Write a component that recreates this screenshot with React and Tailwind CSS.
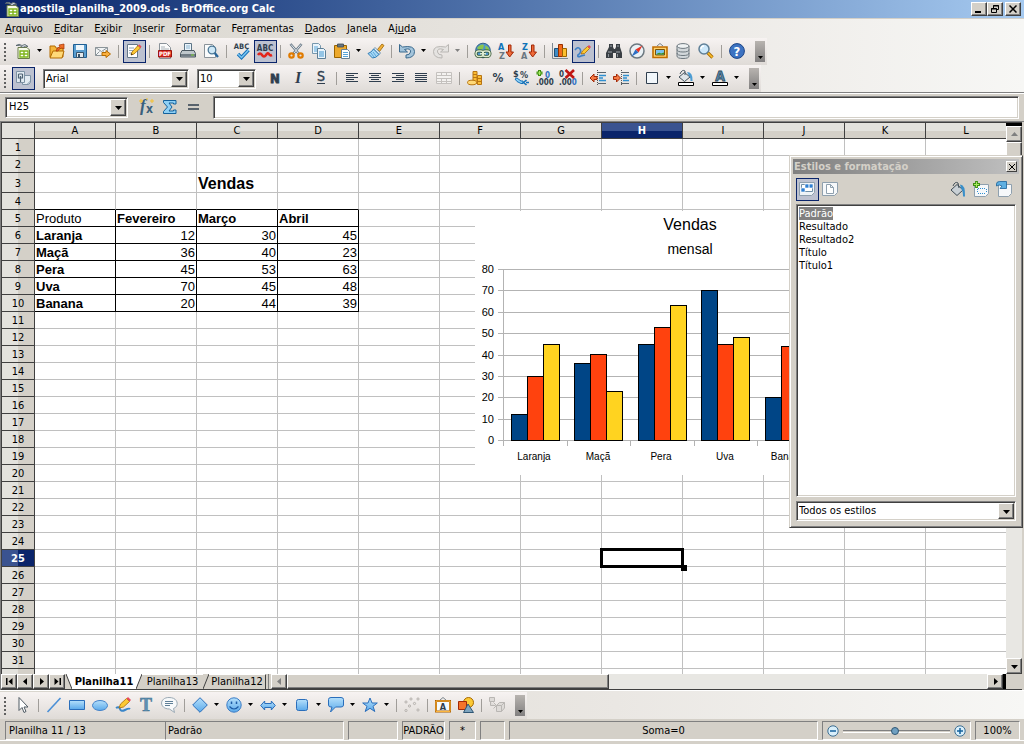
import React from "react";
import clsx from "clsx";

const INK = "#2f3e4e";

const icons = {
  calc: (
    <>
      <path d="M3 4.500h9l2.500 2.500v8.500H3z" fill="#f7fbe9" stroke="#6b7d4a" />
      <path d="M5 8h8v6H5z" fill="#fff" stroke="#7fb51c" strokeWidth="1.400" />
      <path d="M5 11h8M9 8v6" stroke="#7fb51c" strokeWidth="1.400" />
      <path d="M1 2.500q3-2.500 6 0q3-2.500 6 1q-3-1-5 1q-3-3-7-2z" fill="#dfe6ea" stroke="#4d5a63" strokeWidth=".8" />
    </>
  ),
  open: (
    <>
      <path d="M1 14V3h5l1 2h7v9z" fill="#f4b53a" stroke="#b36b00" />
      <path d="M1 15l3-7h11l-2 7z" fill="#ffd978" stroke="#b36b00" />
      <path d="M7 8q1-4 4-4l-1-2 5-1v5l-2-1q-3 0-4 3z" fill="#f0702a" stroke="#a33000" strokeWidth=".7" />
    </>
  ),
  save: (
    <>
      <path d="M1.500 1.500h13v13h-13z" fill="#5a9ed0" stroke="#1f5f93" />
      <path d="M4 2h8v5H4z" fill="#eef6fb" />
      <path d="M4.500 9.500h7v5h-7z" fill="#e4e9ec" stroke="#37536b" />
      <path d="M6 11h2v3H6z" fill="#37536b" />
    </>
  ),
  mail: (
    <>
      <path d="M.5 4.500h12v8H.5z" fill="#f2f4f5" stroke="#8b9499" />
      <path d="M.5 4.500l6 4 6-4M.5 12.500l4-4M12.500 12.500l-4-4" fill="none" stroke="#8b9499" />
      <path d="M7 9.500h4V7.500l4.500 3.500-4.500 3.500v-2H7z" fill="#fbb040" stroke="#b36b00" />
    </>
  ),
  edit: (
    <>
      <path d="M1.500 1.500h10v13h-10z" fill="#fff" stroke="#66788a" />
      <path d="M3 5h5M3 7.500h4M3 10h3" stroke="#8fa3b5" />
      <path d="M5 12l1-3 6-6.500 2.500 2.500-6.500 6z" fill="#fcc934" stroke="#a86a00" strokeWidth=".8" />
      <path d="M12 2.500l1.200-1.300 2.300 2.300-1 1.500z" fill="#e8485c" />
      <path d="M5 12l.5-1.800 1.300 1.200z" fill="#222" />
    </>
  ),
  pdf: (
    <>
      <path d="M2.500.5h7l4 4v11h-11z" fill="#fbfbfb" stroke="#8a9299" />
      <path d="M4 4h4M4 6h8" stroke="#aab2b8" />
      <path d="M1.500 7.500h13v6.500h-13z" fill="#df2a20" stroke="#9c120b" />
      <text x="8" y="13" fontSize="6" fontWeight="700" textAnchor="middle" fill="#fff">PDF</text>
    </>
  ),
  print: (
    <>
      <path d="M4.500.5h7v8h-7z" fill="#eaf4fb" stroke="#5d7486" />
      <path d="M6 3h4M6 5h4" stroke="#8fb6d1" />
      <path d="M2 7.500h12l1.500 3v3.500H.5v-3.500z" fill="#bfc7cc" stroke="#4b5862" />
      <path d="M1 11h14v2.500H1z" fill="#707b84" />
      <path d="M11 11.500h3v1h-3z" fill="#7fd636" />
    </>
  ),
  preview: (
    <>
      <path d="M1.500 1.500h8l3 3v10h-11z" fill="#fafbfc" stroke="#8a9299" />
      <circle cx="9" cy="7" r="3.800" fill="#cfe8f7" stroke="#4c7896" strokeWidth="1.300" />
      <path d="M11.700 10l3.300 4" stroke="#28659a" strokeWidth="2.200" />
    </>
  ),
  spell: (
    <>
      <text x="7.500" y="6" fontSize="7.500" fontWeight="700" textAnchor="middle" fill={INK}>ABC</text>
      <path d="M4 11l3.500 3.500 7-7.500" fill="none" stroke="#1471b8" strokeWidth="3.400" />
      <path d="M4 11l3.500 3.500 7-7.500" fill="none" stroke="#7cc6f2" strokeWidth="1.500" />
    </>
  ),
  autospell: (
    <>
      <text x="8" y="8" fontSize="8" fontWeight="700" textAnchor="middle" fill={INK}>ABC</text>
      <path d="M1 12q2-3 4 0t4 0 3-1 3 1" fill="none" stroke="#e3261b" strokeWidth="2.600" />
    </>
  ),
  cut: (
    <>
      <path d="M2.500 1l8.500 10M13.500 1l-8.500 10" stroke="#6d7c89" strokeWidth="2.600" />
      <path d="M3 1.500l7.500 9M13 1.500L6 10" stroke="#dfe7ec" />
      <circle cx="3.500" cy="12.500" r="2.200" fill="none" stroke="#e07b00" strokeWidth="2.200" />
      <circle cx="12.500" cy="12.500" r="2.200" fill="none" stroke="#e07b00" strokeWidth="2.200" />
    </>
  ),
  copy: (
    <>
      <path d="M1.500.5h6l2 2v8h-8z" fill="#eaf4fb" stroke="#7797ad" />
      <path d="M3 4h4M3 6h4M3 8h4" stroke="#59a5d8" />
      <path d="M6.500 5.500h6l2 2v8h-8z" fill="#eaf4fb" stroke="#5d7f97" />
      <path d="M8 9h5M8 11h5M8 13h5" stroke="#3f95cf" />
    </>
  ),
  paste: (
    <>
      <path d="M.5 2.500h12v12H.5z" fill="#eda92c" stroke="#9a6400" />
      <path d="M3.500 1h6v3h-6z" fill="#687681" stroke="#3e4a53" strokeWidth=".8" />
      <path d="M7.500 6.500h6l2 2v7h-8z" fill="#fff" stroke="#6a8193" />
      <path d="M9 9.500h5M9 11.500h5M9 13.500h5" stroke="#59a5d8" />
    </>
  ),
  brush: (
    <>
      <path d="M9.500 6.500L14 1l2 1.500-4.500 6z" fill="#f2b13a" stroke="#9a6400" strokeWidth=".8" />
      <path d="M7 4.500l5.500 5.500-1.500 1.500-5.500-5.500z" fill="#e6edf2" stroke="#4d7ea3" strokeWidth=".8" />
      <path d="M5.500 6l5.500 5.500Q8 15 4.500 15L0 10.500Q3.500 9.500 5.500 6z" fill="#a7d8f6" stroke="#2c7bb5" />
      <path d="M3 10l3 4M5 9l3 4" stroke="#4b9bd0" strokeWidth=".8" />
    </>
  ),
  undo: <path d="M.5 1.500v7.500h8L5.500 6.500Q12 4.500 11.500 9q-.5 3-4.500 3v3q8.500 0 8.500-6.500T3.500 4z" fill="#a3c4db" stroke="#3b6a8e" />,
  redo: <path d="M15.500 1.500v7.500h-8L10.500 6.500Q4 4.500 4.500 9q.5 3 4.500 3v3Q.5 15 .5 8.500T12.500 4z" fill="#e5e3e1" stroke="#b9b6b3" />,
  link: (
    <>
      <circle cx="8" cy="7.500" r="7.300" fill="#4d94cc" stroke="#35618a" />
      <path d="M2 5q4-5 7-3l-1 4-4 1zM10 2.500q4 1 4.500 5l-3.500 1z" fill="#8bc64f" />
      <rect x="1" y="8" width="7.500" height="5.500" rx="2.700" fill="none" stroke="#345331" strokeWidth="3" />
      <rect x="7.500" y="8" width="7.500" height="5.500" rx="2.700" fill="none" stroke="#345331" strokeWidth="3" />
      <rect x="1" y="8" width="7.500" height="5.500" rx="2.700" fill="none" stroke="#dcebd2" strokeWidth="1.400" />
      <rect x="7.500" y="8" width="7.500" height="5.500" rx="2.700" fill="none" stroke="#dcebd2" strokeWidth="1.400" />
      <path d="M5 10.700h6" stroke="#dcebd2" strokeWidth="1.400" />
    </>
  ),
  sortAsc: (
    <>
      <text x="0" y="7" fontSize="9" fontWeight="700" fill="#0f73b8">A</text>
      <text x="1" y="16" fontSize="9" fontWeight="700" fill="#697681">Z</text>
      <path d="M10.500 2h2.500v7h2.500L11.700 14 8 9h2.500z" fill="#ee6a3a" stroke="#a32806" />
    </>
  ),
  sortDesc: (
    <>
      <text x="1" y="7" fontSize="9" fontWeight="700" fill="#0f73b8">Z</text>
      <text x="0" y="16" fontSize="9" fontWeight="700" fill="#697681">A</text>
      <path d="M10.500 2h2.500v7h2.500L11.700 14 8 9h2.500z" fill="#ee6a3a" stroke="#a32806" />
    </>
  ),
  chart: (
    <>
      <path d="M.5 0v15.500H16" fill="none" stroke="#7c8993" />
      <path d="M2.500 5.500h4v8h-4z" fill="#3f8cc4" stroke="#1e4f78" />
      <path d="M6.500 1.500h4v12h-4z" fill="#f26a1c" stroke="#972f00" />
      <path d="M10.500 5.500h4v8h-4z" fill="#fcc02e" stroke="#9a6400" />
    </>
  ),
  draw: (
    <>
      <path d="M0 7q3-4 5-1t-2 6q-1 3 3 1l4-1" fill="none" stroke="#3d7fc4" strokeWidth="1.600" />
      <path d="M6 11l1.500-3 5-4.500 2 2-5 5z" fill="#fcc934" stroke="#a86a00" strokeWidth=".8" />
      <path d="M12.500 3.500L14 2l2 2-1.500 1.500z" fill="#e8485c" />
    </>
  ),
  find: (
    <>
      <path d="M3 1h4v3l1 2h1l1-2V1h4v3l2 6v5h-6v-5H7v5H0v-5l3-6z" fill="#3a3f44" />
      <path d="M2 9h4M10 9h4M4 3h2M11 3h2" stroke="#a2a9af" />
      <path d="M2 11h1v3H2zM11 11h1v3h-1z" fill="#8b9298" />
    </>
  ),
  navigator: (
    <>
      <circle cx="8" cy="8" r="7" fill="#eaf1f5" stroke="#6c7880" strokeWidth="1.500" />
      <path d="M13.500 2.500L9.500 9.500 6.500 6.500z" fill="#e83324" />
      <path d="M2.500 13.500l4-7 3 3z" fill="#2d6fc4" />
    </>
  ),
  gallery: (
    <>
      <path d="M5 3l3-2.500L11 3" fill="none" stroke="#7a848b" />
      <path d="M1 4h14v10.500H1z" fill="#ffd36c" stroke="#c16e00" strokeWidth="1.600" />
      <path d="M3.500 6.500h9v5.500h-9z" fill="#7cc3ee" stroke="#78520a" />
      <path d="M4 11.500q3-3 5-1l3-1v2z" fill="#3f9222" />
    </>
  ),
  database: (
    <>
      <path d="M2 3v10q0 2.500 6 2.500t6-2.500V3z" fill="#d3d8db" stroke="#6e787f" />
      <ellipse cx="8" cy="3" rx="6" ry="2.400" fill="#eff2f3" stroke="#6e787f" />
      <path d="M2 6.500Q2 9 8 9t6-2.500M2 10q0 2.500 6 2.500t6-2.500" fill="none" stroke="#6e787f" />
    </>
  ),
  zoom: (
    <>
      <path d="M9.500 9.500l5 5" stroke="#a86a00" strokeWidth="3.200" />
      <path d="M9.800 9.800l4.700 4.700" stroke="#fcc02e" strokeWidth="1.600" />
      <circle cx="6" cy="6" r="5" fill="#cde8fa" stroke="#5f7f97" strokeWidth="1.500" />
      <path d="M3 6q0-3 3-3" stroke="#fff" strokeWidth="1.300" fill="none" />
    </>
  ),
  help: (
    <>
      <circle cx="8" cy="8" r="7.400" fill="#3d73c2" stroke="#1d4587" />
      <text x="8" y="13" fontSize="13" fontWeight="700" textAnchor="middle" fill="#fff">?</text>
    </>
  ),
  styles: (
    <>
      <path d="M1.500 1.500h8v11h-8zM9.500 5.500h6v7l-2 2h-6v-2" fill="#e2ebf2" stroke="#7e93a5" />
      <path d="M3.500 4v4h4V4M5.500 6v6M3.500 4h4" fill="none" stroke="#4f6375" strokeWidth="1.200" />
      <path d="M12 14.500l3.500-3.500" stroke="#7e93a5" />
    </>
  ),
  bold: <text x="8" y="12.500" fontSize="13" fontWeight="700" textAnchor="middle" fill={INK} stroke={INK} strokeWidth=".8">N</text>,
  italic: <text x="8" y="13" fontSize="16" fontStyle="italic" fontWeight="700" textAnchor="middle" fill={INK} className="font-['Liberation_Serif',serif]">I</text>,
  underline: (
    <>
      <text x="8" y="11" fontSize="14" textAnchor="middle" fill={INK} stroke={INK} strokeWidth=".4">S</text>
      <path d="M4 13.500h8" stroke={INK} />
    </>
  ),
  left: <path d="M2 3.500h12M2 5.500h8M2 7.500h12M2 9.500h8M2 11.500h12" stroke={INK} />,
  center: <path d="M2 3.500h12M4 5.500h8M2 7.500h12M4 9.500h8M2 11.500h12" stroke={INK} />,
  right: <path d="M2 3.500h12M6 5.500h8M2 7.500h12M6 9.500h8M2 11.500h12" stroke={INK} />,
  justify: <path d="M2 3.500h12M2 5.500h12M2 7.500h12M2 9.500h12M2 11.500h12" stroke={INK} />,
  merge: <path d="M.5 2.500h15v11H.5zM.5 5.500h15M.5 8.500h15M.5 11.500h15M5.500 2.500v3M10.500 2.500v3M5.500 8.500v5M10.500 8.500v5" fill="#f4f2f0" stroke="#c4c1be" />,
  currency: (
    <>
      <path d="M6 1.500h4v12H6z" fill="#fbbc35" stroke="#b87512" />
      <path d="M10.500 5.500h4v9h-4z" fill="#fbbc35" stroke="#b87512" />
      <path d="M6 4.500h4M6 7.500h4M10.500 8.500h4M10.500 11.500h4" stroke="#b87512" />
      <ellipse cx="5" cy="12.500" rx="4.500" ry="2.300" fill="#ffd978" stroke="#b87512" />
    </>
  ),
  percent: <text x="8" y="12" fontSize="12" fontWeight="700" textAnchor="middle" fill={INK}>%</text>,
  standard: (
    <>
      <text x="0" y="7" fontSize="9" fontWeight="700" fill={INK}>$</text>
      <text x="7" y="8" fontSize="9" fontWeight="700" fill={INK}>%</text>
      <path d="M4 8l4 3h2v2.500H8L4 11.500 2 9z" fill="#8fd0f5" stroke="#1471b8" />
      <path d="M16 12.500h-3M13.500 10l-3 2.500 3 2.500" fill="none" stroke="#1471b8" strokeWidth="1.600" />
    </>
  ),
  addDecimal: (
    <>
      <path d="M3.500 0v6M.5 3h6" stroke="#3f8f12" strokeWidth="3" />
      <path d="M3.500 1v4M1.500 3h4" stroke="#a8ea62" strokeWidth="1" />
      <text x="9" y="8" fontSize="8" fontWeight="700" fill="#3072c4">0</text>
      <text x="0" y="15" fontSize="8" fontWeight="700" fill={INK}>.000</text>
    </>
  ),
  delDecimal: (
    <>
      <text x="0" y="7" fontSize="8" fontWeight="700" fill={INK}>0</text>
      <text x="0" y="15" fontSize="8" fontWeight="700" fill={INK}>.00<tspan fill="#3072c4">0</tspan></text>
      <path d="M6.500 0l8.500 8M15 0L6.500 8" stroke="#c01512" strokeWidth="2.600" />
    </>
  ),
  outdent: (
    <>
      <path d="M7.500 0v16" stroke="#555" strokeDasharray="1 1" />
      <path d="M8 2.500h8M8 13.500h8" stroke="#59646d" />
      <path d="M9 5.500h7M9 8h4M9 10.500h7" stroke="#2f8fd0" strokeWidth="1.600" />
      <path d="M0 8l4-4v2.500h3v3H4V12z" fill="#f47a45" stroke="#a32806" />
    </>
  ),
  indent: (
    <>
      <path d="M8.500 0v16" stroke="#555" strokeDasharray="1 1" />
      <path d="M8 2.500h8M8 13.500h8" stroke="#59646d" />
      <path d="M10 5.500h6M10 8h4M10 10.500h6" stroke="#2f8fd0" strokeWidth="1.600" />
      <path d="M7.500 8l-4-4v2.500H.5v3h3V12z" fill="#f47a45" stroke="#a32806" />
    </>
  ),
  border: <path d="M2.500 2.500h11v11h-11z" fill="#f2f7fb" stroke={INK} />,
  fill: (
    <>
      <path d="M6.500 2.500L12 7l-5.500 4.500L1 7z" fill="#dfe5e9" stroke="#45535e" />
      <path d="M2 4q2-5 5-3v4" fill="none" stroke="#45535e" />
      <path d="M9 2q6 0 5.500 9h-2q0-4-1.500-5z" fill="#4c9cd3" />
      <path d="M.5 12.500h15v3H.5z" fill="#fff" stroke="#000" />
    </>
  ),
  bucket: (
    <>
      <path d="M7 3.500L13 9l-6 5.500L1 9z" fill="#c9d0d5" stroke="#3f4c56" />
      <path d="M3 5q2-5 5-3l1 5" fill="none" stroke="#3f4c56" />
      <path d="M10 3.500q5.500 0 5 12h-2q0-6-2-8z" fill="#3a8fc9" />
    </>
  ),
  color: (
    <>
      <text x="8" y="11" fontSize="14" fontWeight="700" textAnchor="middle" fill="#5b8cae" stroke="#2f4d64" strokeWidth=".8">A</text>
      <path d="M.5 12.500h15v3H.5z" fill="#fff" stroke="#000" />
    </>
  ),
  fx: (
    <>
      <text x="1" y="12" fontSize="17" fontStyle="italic" fontWeight="700" fill="#3a5f7c" className="font-['Liberation_Serif',serif]">f</text>
      <text x="7" y="14" fontSize="12" fontWeight="700" fill="#3a5f7c">x</text>
      <path d="M2 0v4M0 2h4M13 0v4M11 2h4M7 0h2" stroke="#f6c12e" />
    </>
  ),
  sum: <path d="M1.500 1.500h12.500v3.500h-2.500v-1H7L10 8l-3 4h4.500v-1H14v3.500H1.500V12.500L5.500 8l-4-4.500z" fill="#8fd0f5" stroke="#13619c" />,
  equal: <path d="M3 6h11M3 10h11" stroke={INK} strokeWidth="1.500" />,
  cursor: <path d="M4 .500v13l3-3 2 5 2-1-2-4.500h4z" fill="#fff" stroke="#4f5a63" />,
  line: <path d="M1.500 15L14.500 1" stroke="#4a8fd6" strokeWidth="1.600" />,
  rect: <path d="M.5 3.500h15v9H.5z" fill="url(#sky)" stroke="#2a6ebb" />,
  ellipse: <ellipse cx="8" cy="8.500" rx="7.500" ry="5" fill="url(#sky)" stroke="#4181c9" />,
  freehand: (
    <>
      <path d="M1 11q3-2 4 1t5 1 5-1" fill="none" stroke="#3a86c9" strokeWidth="2" />
      <path d="M4 11l1.500-4 6-5.500 3 3-6 5.500z" fill="#fcc934" stroke="#a86a00" strokeWidth=".8" />
      <path d="M11.500 1.500L13 0l3 3-1.500 1.500z" fill="#e8485c" />
    </>
  ),
  text: <text x="8" y="14" fontSize="18" fontWeight="700" textAnchor="middle" fill="#5f93b5" stroke="#41708f" strokeWidth=".5" className="font-['Liberation_Serif',serif]">T</text>,
  callout: (
    <>
      <path d="M8 .500c10 0 10 9.500 4.500 11l1 4-5-3.500C-2 12-2 .500 8 .500z" fill="#f7f9fa" stroke="#9aa9b4" />
      <path d="M4 4.500h8M4 6.500h8M4 8.500h5" stroke="#5f7f97" />
    </>
  ),
  diamond: <path d="M8 .700L15.300 8 8 15.300.700 8z" fill="url(#sky)" stroke="#2a6ebb" />,
  smiley: (
    <>
      <circle cx="8" cy="8" r="7.200" fill="url(#sky)" stroke="#3a7cc6" />
      <path d="M5.500 4.500v2.500M10.500 4.500v2.500" stroke="#1e5ba5" strokeWidth="1.500" />
      <path d="M3.500 9.500q4.500 5 9 0" fill="none" stroke="#1e5ba5" strokeWidth="1.200" />
    </>
  ),
  arrows: <path d="M.700 8.500l4-4.500v2.500h6.600V4l4 4.500-4 4.500v-2.500H4.700V13z" fill="url(#sky)" stroke="#2a6ebb" />,
  rounded: <rect x="2.500" y="2.500" width="11" height="11" rx="2" fill="url(#sky)" stroke="#2a6ebb" />,
  bubble: <path d="M3 .500h10q2.500 0 2.500 2v5.500q0 2-2.500 2H7.500L2.500 15l1.500-5H3Q.5 10 .5 8V2.500q0-2 2.500-2z" fill="url(#sky)" stroke="#2a6ebb" />,
  star: <path d="M8 1l2 5h5.300l-4.300 3.300 1.800 5.200L8 11.300l-4.800 3.200L5 9.300.700 6H6z" fill="url(#sky)" stroke="#2a6ebb" />,
  points: (
    <g fill="#eae7e4" stroke="#b5b1ad">
      <circle cx="2" cy="5" r="1.100" />
      <circle cx="7" cy="2" r="1.100" />
      <circle cx="14" cy="2" r="1.100" />
      <circle cx="10.500" cy="6.500" r="1.100" />
      <circle cx="5.500" cy="9" r="1.100" />
      <circle cx="2" cy="13.500" r="1.100" />
      <circle cx="14" cy="13" r="1.100" />
    </g>
  ),
  fontwork: (
    <>
      <path d="M5 3l3-2.500L11 3" fill="none" stroke="#7a848b" />
      <path d="M1 4h14v10.500H1z" fill="#f5fafd" stroke="#a85c00" strokeWidth="2" />
      <path d="M1 4h14v10.500H1z" fill="none" stroke="#fbb53c" strokeWidth="1" />
      <text x="8" y="13" fontSize="9" fontWeight="700" textAnchor="middle" fill={INK}>A</text>
    </>
  ),
  shapes: (
    <>
      <circle cx="10.500" cy="5.500" r="5" fill="#fcc934" stroke="#a86a00" />
      <path d="M.5 4.500h8v8h-8z" fill="#f4742a" stroke="#a32806" />
      <path d="M10 7l5.500 8.500h-10z" fill="#7ea4be" stroke="#2f5674" />
    </>
  ),
  extrusion: (
    <>
      <path d="M.5.500h5v4h-5zM1.500 4.500v4h5" fill="#dedbd8" stroke="#b9b6b3" />
      <path d="M4.500 5.500L7.500 8.500l-3 3" fill="none" stroke="#b9b6b3" />
      <path d="M7.500 8.500l3-3h5v5.500l-3 3.500h-5z" fill="#dedbd8" stroke="#b9b6b3" />
      <path d="M7.500 8.500h5l3-3M12.500 8.500v6" stroke="#b9b6b3" fill="none" />
    </>
  ),
  cellStyles: (
    <>
      <path d="M.5 1.500h15v10l-3 3H.5z" fill="#edf3f8" stroke="#8fa0ae" />
      <path d="M2.500 3.500h11v7h-11z" fill="#fff" stroke="#6f8ea6" />
      <path d="M6 3h4v4H6zM10 3h4v4h-4zM2 7h4v4H2z" fill="#2f7fd0" stroke="#fff" strokeWidth=".6" />
    </>
  ),
  pageStyles: (
    <>
      <path d="M.5 1.500h15v10l-3 3H.5z" fill="#f6f8fa" stroke="#8fa0ae" />
      <path d="M4.500 3.500h4l3 3v6h-7zM8.500 3.500v3h3" fill="#fff" stroke="#8fa0ae" />
    </>
  ),
  newStyle: (
    <>
      <path d="M1.500 3.500h14v9l-3 3h-11z" fill="#f6f8fa" stroke="#8fa0ae" />
      <path d="M5 7.500h8M5 12.500h7M4.500 8v4M13.500 8v4" stroke="#2f8fd0" strokeDasharray="1 1" />
      <path d="M3.500 0v7M0 3.500h7" stroke="#3f8f12" strokeWidth="2.800" />
      <path d="M3.500 1v5M1 3.500h5" stroke="#a8ea62" />
    </>
  ),
  updateStyle: (
    <>
      <path d="M2.500 3.500h13v9l-3 3h-10z" fill="#f6f8fa" stroke="#8fa0ae" />
      <path d="M.5 3q0-2.500 3-2.500h7v7H4l2-2.500Q3 3 .5 5z" fill="#5fb0e2" stroke="#1c6299" strokeWidth=".8" />
    </>
  ),
};

const TOOLBAR_MAIN = [
  ["calc", "Novo"], "v", ["open", "Abrir"], ["save", "Salvar"], ["mail", "E-mail"], "|",
  ["edit", "Editar arquivo", true], "|",
  ["pdf", "Exportar PDF"], ["print", "Imprimir"], ["preview", "Visualizar"], "|",
  ["spell", "Ortografia"], ["autospell", "Autoverificação", true], "|",
  ["cut", "Cortar"], ["copy", "Copiar"], ["paste", "Colar"], "v", ["brush", "Pincel"], "|",
  ["undo", "Desfazer"], "v", ["redo", "Restaurar"], "x", "|",
  ["link", "Hiperlink"], ["sortAsc", "Ordem crescente"], ["sortDesc", "Ordem decrescente"], "|",
  ["chart", "Gráfico"], ["draw", "Desenho", true], "|",
  ["find", "Localizar"], ["navigator", "Navegador"], ["gallery", "Galeria"], ["database", "Fontes de dados"], ["zoom", "Zoom"], "|",
  ["help", "Ajuda"],
];

const TOOLBAR_FORMAT = [
  ["bold", "Negrito"], ["italic", "Itálico"], ["underline", "Sublinhado"], "|",
  ["left", "Esquerda"], ["center", "Centro"], ["right", "Direita"], ["justify", "Justificado"], ["merge", "Mesclar células"], "|",
  ["currency", "Moeda"], ["percent", "Porcentagem"], ["standard", "Padrão"], ["addDecimal", "Adicionar casa decimal"], ["delDecimal", "Excluir casa decimal"], "|",
  ["outdent", "Diminuir recuo"], ["indent", "Aumentar recuo"], "|",
  ["border", "Bordas"], "v", ["fill", "Cor do plano de fundo"], "v", ["color", "Cor da fonte"], "v",
];

const TOOLBAR_DRAW = [
  ["cursor", "Selecionar"], "|",
  ["line", "Linha"], ["rect", "Retângulo"], ["ellipse", "Elipse"], ["freehand", "Linha à mão livre"], ["text", "Texto"], ["callout", "Legenda"], "|",
  ["diamond", "Formas básicas"], "v", ["smiley", "Formas de símbolos"], "v", ["arrows", "Setas cheias"], "v",
  ["rounded", "Fluxogramas"], "v", ["bubble", "Textos explicativos"], "v", ["star", "Estrelas"], "v", "|",
  ["points", "Pontos"], "|",
  ["fontwork", "Fontwork"], ["shapes", "Do arquivo"], "|",
  ["extrusion", "Extrusão"],
];

const MENUS = [
  ["", "A", "rquivo"],
  ["", "E", "ditar"],
  ["E", "x", "ibir"],
  ["", "I", "nserir"],
  ["", "F", "ormatar"],
  ["Fe", "r", "ramentas"],
  ["", "D", "ados"],
  ["", "J", "anela"],
  ["Aj", "u", "da"],
];

const COLUMNS = "ABCDEFGHIJKL".split("");
const ROWS = Array.from({ length: 32 }, (_, i) => i + 1);

const SALES = [
  ["Laranja", 12, 30, 45],
  ["Maçã", 36, 40, 23],
  ["Pera", 45, 53, 63],
  ["Uva", 70, 45, 48],
  ["Banana", 20, 44, 39],
];

const CELLS = {
  3: [null, null, "Vendas"],
  5: ["Produto", "Fevereiro", "Março", "Abril"],
  6: SALES[0],
  7: SALES[1],
  8: SALES[2],
  9: SALES[3],
  10: SALES[4],
};

const STYLE_NAMES = ["Padrão", "Resultado", "Resultado2", "Título", "Título1"];

const RAISED = "border border-t-white border-l-white border-r-[#404040] border-b-[#404040] bg-[#d4d0c8] shadow-[inset_-1px_-1px_0_#808080]";
const SUNKEN = "border border-t-[#808080] border-l-[#808080] border-r-white border-b-white bg-white shadow-[inset_1px_1px_0_#404040,inset_-1px_-1px_0_#d4d0c8]";

function Icon({ name }) {
  return (
    <svg viewBox="0 0 16 16" className="size-4 shrink-0 overflow-visible" fill="none" aria-hidden="true">
      {icons[name]}
    </svg>
  );
}

function Triangle({ dir = "down", className = "text-black" }) {
  const paths = {
    down: "M0 2h7L3.500 6z",
    up: "M0 5h7L3.500 1z",
    left: "M5 0v7L1 3.500z",
    right: "M2 0v7l4-3.500z",
    first: "M0 0h1.500v7H0zM6.500 0v7L2.500 3.500z",
    last: "M5.500 0H7v7H5.500zM.500 0v7l4-3.500z",
  };
  return (
    <svg viewBox="0 0 7 7" className={clsx("size-[7px] shrink-0", className)} fill="currentColor" aria-hidden="true">
      <path d={paths[dir]} />
    </svg>
  );
}

function ToolButton({ icon, label, pressed }) {
  return (
    <button
      type="button"
      aria-label={label}
      className={clsx(
        "flex size-[23px] shrink-0 items-center justify-center pr-px pb-px",
        pressed && "border border-[#0a246a] bg-[#bcc1d0]"
      )}
    >
      <Icon name={icon} />
    </button>
  );
}

function Caret({ color = "#000" }) {
  return (
    <svg viewBox="0 0 5 3" className="h-[3px] w-[5px]" fill={color} aria-hidden="true">
      <path d="M0 0h5L2.500 3z" />
    </svg>
  );
}

function ToolItems({ items }) {
  return items.map((item, i) => {
    if (item === "|") {
      return (
        <span key={i} className="flex w-2 shrink-0 pl-[3px]">
          <span className="h-[13px] w-px bg-[#a09d99]" />
        </span>
      );
    }
    if (item === "v" || item === "x") {
      return (
        <button key={i} type="button" aria-label="Mais opções" className="flex h-[23px] w-[11px] shrink-0 items-center pb-0.5 pl-0.5">
          <Caret color={item === "v" ? "#000" : "#808080"} />
        </button>
      );
    }
    return <ToolButton key={i} icon={item[0]} label={item[1]} pressed={item[2]} />;
  });
}

function Toolbar({ children }) {
  return (
    <div className="flex h-[27px] w-max items-center bg-linear-to-b from-[#f7f3f2] to-[#dfdbd7] pr-0.5">
      <span className="mr-1.5 ml-1 h-[18px] border-l-2 border-dotted border-[#606060]" />
      {children}
      <button
        type="button"
        aria-label="Mais botões"
        className="ml-1.5 flex h-[21px] w-2.5 items-end justify-center bg-linear-to-b from-[#b8b4b0] to-[#828080] pb-[3px]"
      >
        <Caret />
      </button>
    </div>
  );
}

function Combo({ label, value, className }) {
  return (
    <div className={clsx("relative h-5", SUNKEN, className)}>
      <select aria-label={label} defaultValue={value} className="block h-full w-full appearance-none bg-transparent pr-5 pl-0.5 text-[11px] leading-4 outline-none">
        <option>{value}</option>
      </select>
      <span className={clsx("pointer-events-none absolute top-px right-px bottom-px flex w-4 items-center justify-center", RAISED)}>
        <Triangle />
      </span>
    </div>
  );
}

function TitleBar() {
  const button = clsx("flex h-[14px] w-4 items-center justify-center", RAISED);
  return (
    <header className="flex h-[19px] shrink-0 items-center border-b border-[#d4d0c8] bg-linear-to-r from-[#0a246a] to-[#a6caf0] pr-[3px] pl-1">
      <Icon name="calc" />
      <h1 className="flex-1 text-[11px] leading-4 font-bold whitespace-nowrap text-white">
        apostila_planilha_2009.ods - BrOffice.org Calc
      </h1>
      <button type="button" aria-label="Minimizar" className={button}>
        <svg viewBox="0 0 8 8" className="size-2"><path d="M0 6h6v2H0z" /></svg>
      </button>
      <button type="button" aria-label="Restaurar" className={button}>
        <svg viewBox="0 0 8 8" className="size-2" fill="none" stroke="#000">
          <path d="M2.500 3V.5h5v4H5.500M2 1h6M.5 3.500h5v4h-5zM0 4h6" />
        </svg>
      </button>
      <button type="button" aria-label="Fechar" className={clsx("ml-0.5", button)}>
        <svg viewBox="0 0 8 8" className="size-2" stroke="#000" strokeWidth="1.500"><path d="M.5.5l7 7M7.500.5l-7 7" /></svg>
      </button>
    </header>
  );
}

function FormulaBar() {
  return (
    <div className="flex h-[29px] shrink-0 items-center border-t border-[#808080] px-[5px] shadow-[inset_0_1px_0_#fff]">
      <div className={clsx("flex h-[21px] w-[123px] items-center p-px", SUNKEN)}>
        <input aria-label="Caixa de nome" defaultValue="H25" className="min-w-0 flex-1 bg-transparent pl-0.5 text-[11px] leading-4 outline-none" />
        <button type="button" aria-label="Intervalos" className={clsx("flex h-full w-4 items-center justify-center", RAISED)}>
          <Triangle />
        </button>
      </div>
      <div className="mr-2 ml-2 flex">
        <ToolButton icon="fx" label="Assistente de funções" />
        <ToolButton icon="sum" label="Soma" />
        <ToolButton icon="equal" label="Função" />
      </div>
      <input aria-label="Linha de entrada" className={clsx("h-[23px] min-w-0 flex-1 px-1 text-[11px] outline-none", SUNKEN)} />
    </div>
  );
}

function Chart() {
  const colors = ["#004586", "#ff420e", "#ffd320"];
  const base = 229;
  const scale = 171 / 80;
  return (
    <svg
      viewBox="0 0 430 264"
      className="absolute top-[88px] left-[473px] h-[264px] w-[430px] bg-white font-['Liberation_Sans',Arial,sans-serif]"
      role="img"
      aria-label="Vendas mensal"
    >
      <text x="215" y="19" fontSize="16" textAnchor="middle">Vendas</text>
      <text x="215" y="43" fontSize="14" textAnchor="middle">mensal</text>
      {[0, 10, 20, 30, 40, 50, 60, 70, 80].map((v) => {
        const y = Math.round(base - v * scale) + 0.5;
        return (
          <g key={v}>
            <path d={`M23 ${y}H346`} stroke="#b3b3b3" />
            <text x="19" y={y + 3} fontSize="11" textAnchor="end">{v}</text>
          </g>
        );
      })}
      <path d="M28.500 58v177" stroke="#b3b3b3" />
      {SALES.map(([name, ...values], i) => {
        const left = 28 + i * 63.5;
        return (
          <g key={name}>
            <path d={`M${Math.round(left + 63.5) + 0.5} 229v6`} stroke="#b3b3b3" />
            {values.map((v, j) => {
              const h = Math.round(v * scale);
              return (
                <rect key={j} x={Math.floor(left + 8) + j * 16 + 0.5} y={base - h + 0.5} width="16" height={h} fill={colors[j]} stroke="#000" />
              );
            })}
            <text x={Math.round(left + 31)} y="249" fontSize="10" textAnchor="middle">{name}</text>
          </g>
        );
      })}
    </svg>
  );
}

function SheetCell({ row, col, value }) {
  const inTable = row >= 5 && row <= 10 && col < 4;
  const selected = row === 25 && col === 7;
  return (
    <td
      className={clsx(
        "border-b px-px pt-px pb-0 whitespace-nowrap",
        col < 11 && "border-r",
        inTable ? "border-black" : "border-r-[#c0c0c0]",
        !inTable && (row === 4 && col < 4 ? "border-b-black" : "border-b-[#c0c0c0]"),
        row === 3 ? "text-base leading-[15px] font-bold" : "text-[13px] leading-[15px]",
        typeof value === "number" && "text-right",
        typeof value === "string" && value !== "Produto" && "font-bold",
        selected && "relative"
      )}
    >
      {value}
      {selected && (
        <span className="absolute -inset-0.5 z-10 border-[3px] border-black">
          <span className="absolute top-full left-full size-1.5 bg-black" />
        </span>
      )}
    </td>
  );
}

function Sheet() {
  return (
    <div className="relative min-w-0 flex-1 overflow-hidden bg-white">
      <table className="w-full table-fixed border-separate border-spacing-0 font-['Liberation_Sans',Arial,sans-serif]">
        <colgroup>
          <col className="w-[33px]" />
          {COLUMNS.map((c, i) => (
            <col key={c} className={i < 11 ? "w-[81px]" : undefined} />
          ))}
        </colgroup>
        <thead>
          <tr className="h-4 font-['DejaVu_Sans_Condensed','DejaVu_Sans',sans-serif] text-[11px] leading-[14px]">
            <td className="border-r border-b border-[#404040] bg-[#e3e2dd] p-0" />
            {COLUMNS.map((c, i) => (
              <th
                key={c}
                scope="col"
                className={clsx(
                  "border-b border-[#404040] p-0 pt-px",
                  i < 11 && "border-r",
                  c === "H"
                    ? "bg-linear-to-b from-[#3a5390] from-50% to-[#0a246a] to-50% font-bold text-white"
                    : "bg-linear-to-b from-[#e3e2dd] from-50% to-[#d4d0c8] to-50% font-normal"
                )}
              >
                {c}
              </th>
            ))}
          </tr>
        </thead>
        <tbody>
          {ROWS.map((row) => (
            <tr key={row} className={row === 3 ? "h-5" : "h-[17px]"}>
              <th
                scope="row"
                className={clsx(
                  "border-r border-b border-[#404040] p-0 pt-px font-['DejaVu_Sans_Condensed','DejaVu_Sans',sans-serif] text-[11px] leading-[15px]",
                  row === 25
                    ? "bg-linear-to-r from-[#3a5390] from-50% to-[#0a246a] to-50% font-bold text-white"
                    : "bg-linear-to-r from-[#e3e2dd] from-50% to-[#d4d0c8] to-50% font-normal"
                )}
              >
                {row < 32 && row}
              </th>
              {COLUMNS.map((c, col) => (
                <SheetCell key={c} row={row} col={col} value={CELLS[row]?.[col]} />
              ))}
            </tr>
          ))}
        </tbody>
      </table>
      <Chart />
    </div>
  );
}

function VerticalScroll() {
  return (
    <div className="flex w-4 shrink-0 flex-col bg-[#e8e7e3]">
      <span className="h-[3px] bg-black" />
      <button type="button" aria-label="Subir" className={clsx("flex h-4 items-center justify-center", RAISED)}>
        <Triangle dir="up" className="text-[#808080]" />
      </button>
      <span className={clsx("h-[200px]", RAISED)} />
      <span className="flex-1" />
      <button type="button" aria-label="Descer" className={clsx("flex h-4 items-center justify-center", RAISED)}>
        <Triangle />
      </button>
    </div>
  );
}

function Slant({ dir, left, right }) {
  return (
    <svg viewBox="0 0 6 15" className="h-[15px] w-1.5 shrink-0" aria-hidden="true">
      <path d={dir === "\\" ? "M0 0l6 15H0z" : "M0 0h6L0 15z"} fill={left} />
      <path d={dir === "\\" ? "M0 0h6v15z" : "M6 0v15H0z"} fill={right} />
      <path d={dir === "\\" ? "M0 0l6 15" : "M6 0L0 15"} stroke="#404040" />
    </svg>
  );
}

function SheetTabs() {
  const tab = "h-[15px] shrink-0 text-[11px] leading-[14px]";
  return (
    <div className="flex h-4 shrink-0 border-b border-[#404040] bg-[#d4d0c8] pr-4">
      {["first", "left", "right", "last"].map((dir) => (
        <button key={dir} type="button" aria-label={dir} className={clsx("flex h-[15px] w-4 shrink-0 items-center justify-center", RAISED)}>
          <Triangle dir={dir} />
        </button>
      ))}
      <span className="w-px bg-[#d4d0c8]" />
      <Slant dir={"\\"} left="#d4d0c8" right="#fff" />
      <button type="button" className={clsx(tab, "w-16 bg-white font-bold")}>Planilha11</button>
      <Slant dir="/" left="#fff" right="#d4d0c8" />
      <button type="button" className={clsx(tab, "w-[61px] border-t border-white")}>Planilha13</button>
      <Slant dir="/" left="#d4d0c8" right="#d4d0c8" />
      <button type="button" className={clsx(tab, "w-[57px] border-t border-r border-t-white border-r-[#404040]")}>Planilha12</button>
      <span className="mx-0.5 w-px bg-[#808080]" />
      <button type="button" aria-label="Rolar para a esquerda" className={clsx("flex w-4 shrink-0 items-center justify-center", RAISED)}>
        <Triangle dir="left" className="text-[#808080]" />
      </button>
      <span className="flex min-w-0 flex-1 bg-[#e8e7e3]">
        <span className={clsx("w-[46%]", RAISED)} />
      </span>
      <button type="button" aria-label="Rolar para a direita" className={clsx("flex w-4 shrink-0 items-center justify-center", RAISED)}>
        <Triangle dir="right" />
      </button>
      <span className="w-[3px] bg-black" />
    </div>
  );
}

function StylesPanel() {
  return (
    <aside className="absolute top-[33px] right-px z-20 flex h-[373px] w-[234px] flex-col border border-t-[#d4d0c8] border-l-[#d4d0c8] border-r-[#404040] border-b-[#404040] bg-[#d4d0c8] p-[3px] shadow-[inset_1px_1px_0_#fff,inset_-1px_-1px_0_#808080]">
      <div className="flex h-[15px] items-center bg-linear-to-r from-[#808080] to-[#c0c0c0] pr-0.5 pl-px">
        <h2 className="flex-1 text-[11px] leading-[15px] font-bold text-[#d4d0c8]">Estilos e formatação</h2>
        <button type="button" aria-label="Fechar painel" className="flex size-[11px] items-center justify-center border border-t-white border-l-white border-r-[#404040] border-b-[#404040] bg-[#d4d0c8]">
          <svg viewBox="0 0 6 6" className="size-1.5" stroke="#000"><path d="M0 0l6 6M6 0L0 6" /></svg>
        </button>
      </div>
      <div className="flex h-[30px] items-center px-[3px]">
        <ToolButton icon="cellStyles" label="Estilos de célula" pressed />
        <ToolButton icon="pageStyles" label="Estilos de página" />
        <span className="flex-1" />
        <ToolButton icon="bucket" label="Modo de preenchimento" />
        <ToolButton icon="newStyle" label="Novo estilo" />
        <ToolButton icon="updateStyle" label="Atualizar estilo" />
      </div>
      <ul className={clsx("mx-[3px] min-h-0 flex-1 p-0.5", SUNKEN)}>
        {STYLE_NAMES.map((name, i) => (
          <li key={name} className="flex h-[13px]">
            <button
              type="button"
              className={clsx("h-[13px] text-[11px] leading-[13px]", i === 0 && "bg-[#808080] text-white")}
            >
              {name}
            </button>
          </li>
        ))}
      </ul>
      <Combo label="Filtro de estilos" value="Todos os estilos" className="mx-[3px] mt-1 mb-[3px]" />
    </aside>
  );
}

function StatusBar() {
  const field = "flex h-[19px] shrink-0 items-center border border-t-[#808080] border-l-[#808080] border-r-white border-b-white text-[11px] leading-4 whitespace-nowrap";
  return (
    <footer className="flex h-[25px] shrink-0 items-start gap-1 pt-0.5 pr-1 pl-[5px] shadow-[inset_0_-3px_0_#d4d0c8,inset_0_-4px_0_#fff]">
      <div className="flex">
        <div className={clsx(field, "w-40 border-r-0 pl-[3px]")}>Planilha 11 / 13</div>
        <div className={clsx(field, "w-[179px] pl-0.5")}>Padrão</div>
      </div>
      <div className={clsx(field, "w-[50px]")} />
      <div className={clsx(field, "w-[43px] justify-center")}>PADRÃO</div>
      <div className={clsx(field, "w-[27px] justify-center")}>*</div>
      <div className={clsx(field, "w-[25px]")} />
      <div className={clsx(field, "min-w-0 flex-1 justify-center")}>Soma=0</div>
      <div className={clsx(field, "w-[149px] justify-between px-1")}>
        <button type="button" aria-label="Diminuir zoom">
          <svg viewBox="0 0 12 12" className="size-3"><circle cx="6" cy="6" r="5.200" fill="#d9effb" stroke="#3e6f92" /><path d="M3 6h6" stroke="#13619c" strokeWidth="1.500" /></svg>
        </button>
        <input
          type="range"
          aria-label="Zoom"
          min="0"
          max="100"
          defaultValue="48"
          className="h-2.5 w-[107px] appearance-none bg-[linear-gradient(#808080,#808080),linear-gradient(#fff,#fff)] bg-[length:100%_1px] bg-[position:0_4px,0_6px] bg-no-repeat [&::-webkit-slider-thumb]:size-2 [&::-webkit-slider-thumb]:appearance-none [&::-webkit-slider-thumb]:rounded-full [&::-webkit-slider-thumb]:border [&::-webkit-slider-thumb]:border-[#2f5674] [&::-webkit-slider-thumb]:bg-[#6f9fc0]"
        />
        <button type="button" aria-label="Aumentar zoom">
          <svg viewBox="0 0 12 12" className="size-3"><circle cx="6" cy="6" r="5.200" fill="#d9effb" stroke="#3e6f92" /><path d="M3 6h6M6 3v6" stroke="#13619c" strokeWidth="1.500" /></svg>
        </button>
      </div>
      <div className={clsx(field, "w-[45px] justify-center")}>100%</div>
    </footer>
  );
}

export default function App() {
  return (
    <div className="flex h-screen w-full flex-col overflow-hidden bg-[#d4d0c8] font-['DejaVu_Sans_Condensed','DejaVu_Sans',sans-serif] text-[11px] text-black">
      <svg className="absolute size-0" aria-hidden="true">
        <defs>
          <linearGradient id="sky" x1="0" y1="0" x2="0" y2="1">
            <stop offset="0" stopColor="#b5e0fb" />
            <stop offset="1" stopColor="#5aa9ea" />
          </linearGradient>
        </defs>
      </svg>
      <TitleBar />
      <div className="shrink-0 bg-linear-to-r from-[#d8d5cd] via-[#eae7e3] via-60% to-[#f7f7f5]">
        <nav className="flex h-[19px] items-center gap-[11px] pt-px pl-[5px]">
          {MENUS.map(([before, key, after]) => (
            <button key={before + key + after} type="button" className="text-[11px] leading-4">
              {before}
              <u>{key}</u>
              {after}
            </button>
          ))}
        </nav>
        <Toolbar>
          <ToolItems items={TOOLBAR_MAIN} />
        </Toolbar>
        <Toolbar>
          <ToolButton icon="styles" label="Estilos e formatação" pressed />
          <Combo label="Nome da fonte" value="Arial" className="mx-2 w-[146px]" />
          <Combo label="Tamanho da fonte" value="10" className="mr-2 w-[59px]" />
          <ToolItems items={TOOLBAR_FORMAT} />
        </Toolbar>
      </div>
      <FormulaBar />
      <main className="relative flex min-h-0 flex-1 flex-col border-t border-l border-[#808080] pr-0.5">
        <div className="flex min-h-0 flex-1 border-t border-l border-[#404040]">
          <Sheet />
          <VerticalScroll />
        </div>
        <SheetTabs />
        <StylesPanel />
      </main>
      <div className="shrink-0 border-t border-white bg-linear-to-r from-[#d8d5cd] via-[#eae7e3] via-60% to-[#f7f7f5] pt-px">
        <Toolbar>
          <ToolItems items={TOOLBAR_DRAW} />
        </Toolbar>
      </div>
      <StatusBar />
    </div>
  );
}
